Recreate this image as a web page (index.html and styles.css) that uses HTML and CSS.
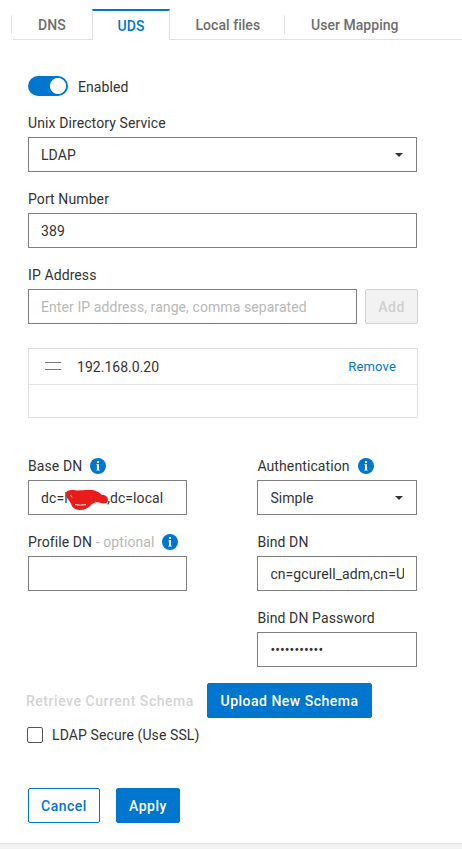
FILE: index.html
```html
<!DOCTYPE html>
<html lang="en">
<head>
<meta charset="utf-8">
<title>UDS</title>
<link rel="stylesheet" href="styles.css">
</head>
<body>
<svg class="defs" width="0" height="0">
  <symbol id="info" viewBox="0 0 16 16">
    <circle cx="8" cy="8" r="8" fill="#0076ce"/>
    <path d="M7 3h2v2H7zM6.5 6.2H9v5.5h.8v.9H6.3v-.9H7V7.2h-.5z" fill="#fff"/>
  </symbol>
  <symbol id="caret" viewBox="0 0 8 4"><path d="M0 0h8L4 4z" fill="#333"/></symbol>
</svg>
<nav class="tabs">
  <a class="tab tab-dns">DNS</a>
  <a class="tab tab-active">UDS</a>
  <a class="tab tab-files">Local files</a>
  <a class="tab tab-mapping">User Mapping</a>
</nav>
<main class="form">
  <div class="toggle-row"><span class="switch"></span><span class="toggle-text">Enabled</span></div>
  <div class="field">
    <div class="label">Unix Directory Service</div>
    <div class="box"><span>LDAP</span><svg class="caret"><use href="#caret"/></svg></div>
  </div>
  <div class="field">
    <div class="label">Port Number</div>
    <div class="box">389</div>
  </div>
  <div class="field">
    <div class="label">IP Address</div>
    <div class="add-row">
      <div class="box placeholder">Enter IP address, range, comma separated</div>
      <button class="btn btn-disabled">Add</button>
    </div>
  </div>
  <div class="list">
    <div class="list-row"><i class="handle"></i><span class="ip">192.168.0.20</span><a class="remove">Remove</a></div>
  </div>
  <div class="columns">
    <div class="column">
      <div class="field">
        <div class="label">Base DN<svg class="info"><use href="#info"/></svg></div>
        <div class="box"><span>dc=l</span><span class="redacted"><svg class="scribble" viewBox="0 0 44 22">
          <path d="M1 6C1 3 3 2 8 2C13 3 17 2 24 2C31 2 34 4 37 7C41 7 43 9 43 12C43 15 40 16 36 15C33 14 30 14 27 16C23 20 20 22 15 22C10 22 7 19 6 16C5 13 1 10 1 6Z" fill="#e91c1c"/>
          <path d="M10 16.5Q15 18 21 16.5M5.5 7L7 9.5" fill="none" stroke="#fff" stroke-width=".9"/>
        </svg></span><span>,dc=local</span></div>
      </div>
      <div class="field">
        <div class="label">Profile DN<span class="optional">- optional</span><svg class="info"><use href="#info"/></svg></div>
        <div class="box"></div>
      </div>
    </div>
    <div class="column column-right">
      <div class="field">
        <div class="label">Authentication<svg class="info"><use href="#info"/></svg></div>
        <div class="box"><span>Simple</span><svg class="caret"><use href="#caret"/></svg></div>
      </div>
      <div class="field">
        <div class="label">Bind DN</div>
        <div class="box"><span class="clip">cn=gcurell_adm,cn=U</span></div>
      </div>
      <div class="field">
        <div class="label">Bind DN Password</div>
        <div class="box"><span class="password">•••••••••••</span></div>
      </div>
    </div>
  </div>
  <div class="schema">
    <span class="retrieve">Retrieve Current Schema</span>
    <button class="btn btn-primary btn-upload">Upload New Schema</button>
  </div>
  <div class="check-row"><span class="checkbox"></span><span>LDAP Secure (Use SSL)</span></div>
  <div class="actions">
    <button class="btn btn-outline">Cancel</button>
    <button class="btn btn-primary btn-apply">Apply</button>
  </div>
</main>
<footer class="footer"></footer>
</body>
</html>
```
FILE: styles.css
```css
* { box-sizing: border-box; }
body {
  margin: 0;
  height: 849px;
  overflow: hidden;
  background: #fff;
  color: #333;
  font: 14px/20px Roboto, sans-serif;
  letter-spacing: .08px;
  display: flex;
  flex-direction: column;
}
.defs { position: absolute; }
.tabs {
  display: flex;
  height: 40px;
  padding: 9px 0 0 11px;
  background: linear-gradient(#e1e1e1, #e1e1e1) 13px 39px / 100% 1px no-repeat;
  font-weight: 500;
  letter-spacing: .04px;
  color: #6e6e6e;
}
.tab { height: 19px; margin-top: 6px; white-space: nowrap; }
.tab-dns { width: 81px; padding-left: 26px; border-left: 1px solid #e1e1e1; }
.tab-active {
  width: 78px;
  height: 31px;
  margin-top: 0;
  padding-top: 5px;
  text-align: center;
  color: #0076ce;
  background: #fff;
  border: 1px solid #e1e1e1;
  border-width: 2px 1px 0;
  border-top-color: #0076ce;
}
.tab-files { width: 114px; padding-left: 25.5px; }
.tab-mapping { padding-left: 26px; border-left: 1px solid #e1e1e1; }
.form { width: 418px; padding: 36px 0 0 28px; }
.toggle-row { display: flex; align-items: center; gap: 10px; height: 20px; margin-bottom: 17px; }
.toggle-text { padding-top: 2px; }
.switch { width: 40px; height: 20px; border-radius: 10px; background: radial-gradient(circle at 30px 10px, #fff 7.6px, #0076ce 8.4px); }
.field { width: 389px; margin-bottom: 17px; }
.label { display: flex; align-items: center; height: 20px; margin-bottom: 4px; letter-spacing: .1px; white-space: nowrap; }
.box {
  display: flex;
  align-items: center;
  height: 35px;
  padding: 0 12px;
  border: 1px solid #808080;
  background: #fff;
  white-space: nowrap;
}
.caret { width: 8px; height: 4px; margin-left: auto; margin-right: 1px; }
.info { width: 16px; height: 16px; margin-left: 7.5px; }
.optional { margin-left: 3.5px; color: #b8b8b8; }
.add-row { display: flex; gap: 8px; width: 390px; }
.add-row .box { width: 329px; }
.placeholder { color: #b8b8b8; }
.btn {
  height: 35px;
  padding: 0;
  border: 1px solid #0076ce;
  border-radius: 2px;
  font: 500 14px/20px Roboto, sans-serif;
  letter-spacing: .5px;
  white-space: nowrap;
}
.btn-disabled { width: 53px; color: #d0d0d0; background: #f2f2f2; border-color: #d2d2d2; }
.btn-primary { color: #fff; background: #0076ce; }
.btn-outline { width: 72px; color: #0076ce; background: #fff; }
.btn-upload { width: 165px; }
.btn-apply { width: 64px; }
.list { width: 390px; height: 70px; margin-top: 24px; border: 1px solid #e1e1e1; }
.list-row { display: flex; align-items: center; height: 36px; padding: 0 21px 0 16px; border-bottom: 1px solid #e1e1e1; }
.handle { width: 16px; height: 8px; border: 1px solid #777; border-width: 1px 0; margin-top: -2px; }
.ip { margin-left: 16px; letter-spacing: .02px; }
.remove { margin-left: auto; font-size: 13px; letter-spacing: .15px; color: #0076ce; }
.columns { display: grid; grid-template-columns: 159px 160px; gap: 70px; margin-top: 38px; height: 211px; }
.columns .field { width: 100%; }
.column-right .label { padding-left: .4px; }
.column-right .info { margin-left: 8.4px; }
.column-right .box { padding-left: 12.4px; }
.redacted { position: relative; width: 39.5px; height: 20px; }
.scribble { position: absolute; left: -2.5px; top: 0; width: 44px; height: 22px; }
.clip { overflow: hidden; }
.schema { display: flex; align-items: center; height: 35px; margin-top: 16px; margin-left: -2px; }
.retrieve { width: 181px; font-weight: 500; letter-spacing: .53px; color: #d4d4d4; white-space: nowrap; }
.check-row { display: flex; align-items: center; gap: 9px; height: 20px; margin: 7px 0 0 -1px; letter-spacing: .1px; }
.checkbox { width: 16px; height: 16px; border: 1px solid #555; border-radius: 2px; }
.actions { display: flex; gap: 16px; margin-top: 43px; }
.footer { height: 6px; margin-top: auto; border-top: 1px solid #e1e1e1; background: #f2f2f2; }
```
